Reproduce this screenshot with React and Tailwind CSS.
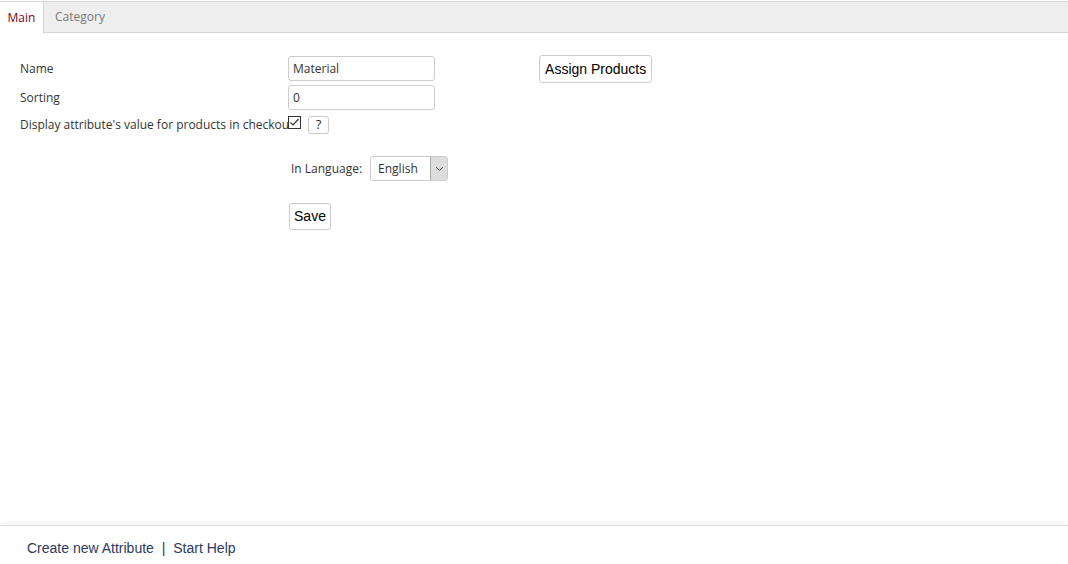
export default function App() {
  const f = { fontFamily: '"Open Sans", "DejaVu Sans", sans-serif' };
  return (
    <div className="w-[1068px] h-[564px] bg-white flex flex-col text-[12px] text-[#333]" style={f}>
      <div className="mt-px border-t border-[#d8d8d8] bg-[#eeeeee] h-[32px] flex border-b border-b-[#d6d6d6]">
        <div className="w-[44px] bg-white text-[#800020] flex items-center justify-center h-[32px] border-r border-[#d6d6d6]">Main</div>
        <div className="px-[11px] text-[#777] flex items-center">Category</div>
      </div>
      <div className="flex-1 flex pl-[20px] pt-[23px]">
        <div className="flex flex-col">
          <div className="flex items-center h-[25px]">
            <div className="w-[268px]">Name</div>
            <div className="w-[147px] h-[25px] border border-[#ccc] rounded-[3px] px-[4px] flex items-center">Material</div>
          </div>
          <div className="flex items-center h-[25px] mt-[4px]">
            <div className="w-[268px]">Sorting</div>
            <div className="w-[147px] h-[25px] border border-[#ccc] rounded-[3px] px-[4px] flex items-center">0</div>
          </div>
          <div className="flex items-start h-[22px] mt-[4px]">
            <div className="w-[268px] whitespace-nowrap mt-[2px]">Display attribute's value for products in checkout</div>
            <svg width="13" height="13" viewBox="0 0 13 13" className="mt-[2px]"><rect x="0.5" y="0.5" width="12" height="12" fill="white" stroke="#333"/><path d="M2.5 6.5 L5 9 L10.5 3" fill="none" stroke="#333" strokeWidth="1.2"/></svg>
            <div className="ml-[7px] mt-[2px] w-[21px] h[18px] h-[18px] border border-[#ccc] rounded-[3px] flex items-center justify-center text-[13px]">?</div>
          </div>
          <div className="flex items-center ml-[271px] mt-[20px] h-[25px]">
            <span className="mr-[8px]">In Language:</span>
            <div className="w-[78px] h-[25px] border border-[#ccc] rounded-[3px] flex items-center justify-between pl-[7px]">
              <span>English</span>
              <div className="w-[17px] h-[23px] bg-[#ddd] border-l border-[#aaa] flex items-center justify-center">
                <svg width="9" height="6" viewBox="0 0 9 6"><path d="M1 1 L4.5 4.5 L8 1" fill="none" stroke="#555"/></svg>
              </div>
            </div>
          </div>
          <div className="ml-[269px] mt-[22px] w-[42px] h-[27px] border border-[#ccc] rounded-[3px] flex items-center justify-center text-[14px] text-black" style={{fontFamily:'"Liberation Sans", Arial, sans-serif'}}>Save</div>
        </div>
        <div className="ml-[91px] mt-[-1px] h-[28px] px-[5px] border border-[#ccc] rounded-[3px] flex items-center text-[14px] text-black" style={{fontFamily:'"Liberation Sans", Arial, sans-serif'}}>Assign Products</div>
      </div>
      <div className="border-t border-[#ddd] h-[39px] pl-[27px] pt-[12px] text-[14px] text-[#2c3a5e]" style={{fontFamily:'"Liberation Sans", Arial, sans-serif', boxShadow:'0 -3px 6px rgba(0,0,0,0.04)'}}>
        Create new Attribute <span className="mx-[4px]">|</span> Start Help
      </div>
    </div>
  );
}
